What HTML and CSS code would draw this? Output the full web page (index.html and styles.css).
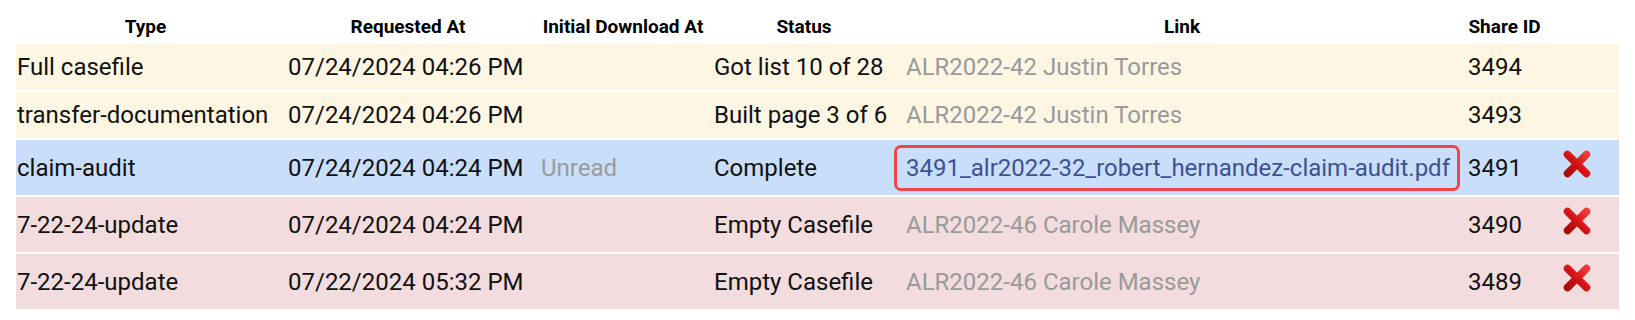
FILE: index.html
```html
<!DOCTYPE html>
<html>
<head>
<meta charset="utf-8">
<link rel="stylesheet" href="styles.css">
</head>
<body>
<svg width="0" height="0" class="defs" aria-hidden="true">
  <defs>
    <linearGradient id="xgrad" x1="1" y1="0" x2="0" y2="1">
      <stop offset="0" stop-color="#ef3b3b"/>
      <stop offset="0.5" stop-color="#d41414"/>
      <stop offset="1" stop-color="#a80b0b"/>
    </linearGradient>
  </defs>
</svg>
<table class="jobs">
  <colgroup>
    <col class="c-type"><col class="c-req"><col class="c-init"><col class="c-status"><col class="c-link"><col class="c-share"><col class="c-del">
  </colgroup>
  <thead>
    <tr>
      <th>Type</th>
      <th>Requested At</th>
      <th>Initial Download At</th>
      <th class="th-status">Status</th>
      <th class="th-link">Link</th>
      <th>Share ID</th>
      <th></th>
    </tr>
  </thead>
  <tbody>
    <tr class="pending">
      <td class="td-type">Full casefile</td>
      <td class="td-req">07/24/2024 04:26 PM</td>
      <td class="td-init"></td>
      <td class="td-status">Got list 10 of 28</td>
      <td class="td-link"><span class="muted link-label">ALR2022-42 Justin Torres</span></td>
      <td class="td-share">3494</td>
      <td class="td-del"></td>
    </tr>
    <tr class="pending">
      <td class="td-type">transfer-documentation</td>
      <td class="td-req">07/24/2024 04:26 PM</td>
      <td class="td-init"></td>
      <td class="td-status">Built page 3 of 6</td>
      <td class="td-link"><span class="muted link-label">ALR2022-42 Justin Torres</span></td>
      <td class="td-share">3493</td>
      <td class="td-del"></td>
    </tr>
    <tr class="complete">
      <td class="td-type">claim-audit</td>
      <td class="td-req">07/24/2024 04:24 PM</td>
      <td class="td-init"><span class="muted">Unread</span></td>
      <td class="td-status">Complete</td>
      <td class="td-link"><a class="file-link" href="#">3491_alr2022-32_robert_hernandez-claim-audit.pdf</a></td>
      <td class="td-share">3491</td>
      <td class="td-del"><span class="del-icon"><svg width="32" height="32" viewBox="0 0 32 32"><path d="M6.5 6.5 L25.5 25.5 M25.5 6.5 L6.5 25.5" stroke="url(#xgrad)" stroke-width="7.5" stroke-linecap="round" fill="none"/></svg></span></td>
    </tr>
    <tr class="empty">
      <td class="td-type">7-22-24-update</td>
      <td class="td-req">07/24/2024 04:24 PM</td>
      <td class="td-init"></td>
      <td class="td-status">Empty Casefile</td>
      <td class="td-link"><span class="muted link-label">ALR2022-46 Carole Massey</span></td>
      <td class="td-share">3490</td>
      <td class="td-del"><span class="del-icon"><svg width="32" height="32" viewBox="0 0 32 32"><path d="M6.5 6.5 L25.5 25.5 M25.5 6.5 L6.5 25.5" stroke="url(#xgrad)" stroke-width="7.5" stroke-linecap="round" fill="none"/></svg></span></td>
    </tr>
    <tr class="empty">
      <td class="td-type">7-22-24-update</td>
      <td class="td-req">07/22/2024 05:32 PM</td>
      <td class="td-init"></td>
      <td class="td-status">Empty Casefile</td>
      <td class="td-link"><span class="muted link-label">ALR2022-46 Carole Massey</span></td>
      <td class="td-share">3489</td>
      <td class="td-del"><span class="del-icon"><svg width="32" height="32" viewBox="0 0 32 32"><path d="M6.5 6.5 L25.5 25.5 M25.5 6.5 L6.5 25.5" stroke="url(#xgrad)" stroke-width="7.5" stroke-linecap="round" fill="none"/></svg></span></td>
    </tr>
  </tbody>
</table>
</body>
</html>
```
FILE: styles.css
```css
html, body {
  margin: 0;
  background: #ffffff;
}
body {
  padding: 8px 16px;
  font-family: Roboto, "Liberation Sans", sans-serif;
  color: #111111;
}
.defs {
  position: absolute;
  width: 0;
  height: 0;
}
.jobs {
  width: 100%;
  table-layout: fixed;
  border-collapse: separate;
  border-spacing: 0 2px;
}
.c-type { width: 259px; }
.c-req { width: 266px; }
.c-init { width: 164px; }
.c-status { width: 186px; }
.c-link { width: 573px; }
.c-share { width: 81px; }
.c-del { width: 74px; }

.jobs th {
  height: 32px;
  padding: 0;
  font-size: 19px;
  font-weight: 700;
  text-align: center;
  vertical-align: middle;
  color: #000;
  white-space: nowrap;
}
.jobs th.th-status { padding-left: 12px; }
.jobs th.th-link { padding-left: 9px; }

.jobs td {
  padding: 4px 0;
  height: 38px;
  font-size: 24px;
  line-height: 38px;
  vertical-align: middle;
  white-space: nowrap;
  text-align: left;
}
.jobs td.td-type { padding-left: 1px; }
.jobs td.td-req { padding-left: 13px; }
.jobs td.td-status { padding-left: 9px; }
.jobs td.td-link { padding-left: 3px; }
.jobs td.td-share { padding-left: 4px; }
.jobs td.td-del { padding-left: 16px; }

.pending td { background: #fdf6e3; }
.complete td { background: #c9defa; }
.empty td { background: #f2dcdd; }

.muted { color: #9a9a9a; }
.link-label { padding-left: 12px; }

.file-link {
  display: inline-block;
  box-sizing: border-box;
  width: 566px;
  padding: 6px 9px;
  line-height: 28px;
  border: 3px solid #f04448;
  border-radius: 7px;
  color: #3d5290;
  text-decoration: none;
  vertical-align: middle;
}

.del-icon {
  display: inline-flex;
  box-sizing: border-box;
  align-items: center;
  justify-content: center;
  height: 47px;
  padding-bottom: 7px;
  vertical-align: middle;
}
.del-icon svg { display: block; }
```
